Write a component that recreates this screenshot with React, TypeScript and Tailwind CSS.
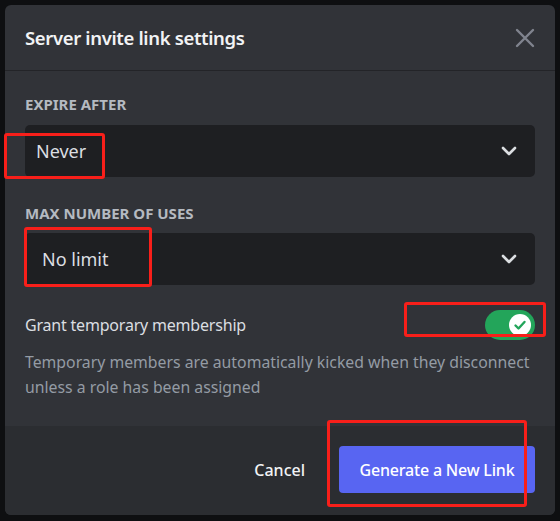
import React from 'react'

const font = { fontFamily: '"Noto Sans", "Open Sans", Arial, sans-serif' }

const Chevron = () => (
  <svg width="16" height="10" viewBox="0 0 16 10" fill="none">
    <path d="M2 2l6 6 6-6" stroke="#dbdee1" strokeWidth="2.6" strokeLinecap="round" strokeLinejoin="round" />
  </svg>
)

const Select = ({ value, pad }: { value: string; pad: string }) => (
  <div className={`flex h-[52px] items-center justify-between rounded-[5px] bg-[#1e1f22] ${pad} pr-[18px]`}>
    <span className="text-[18px] text-[#dbdee1]">{value}</span>
    <Chevron />
  </div>
)

const RedBox = ({ className }: { className: string }) => (
  <div className={`pointer-events-none absolute rounded-[3px] border-[3px] border-[#f81f1a] ${className}`} />
)

export default function App() {
  return (
    <div className="relative h-[521px] w-[560px] overflow-hidden bg-[#0e0f11] pl-[5px] pt-[5px]" style={font}>
      <div className="flex h-[510px] w-[550px] flex-col overflow-hidden rounded-[6px] bg-[#313338]">
        {/* Header */}
        <div className="flex h-[66px] items-center justify-between border-b border-[#232428] px-5">
          <h1 className="text-[18.5px] font-semibold tracking-[-0.35px] text-[#f2f3f5]">Server invite link settings</h1>
          <svg width="20" height="20" viewBox="0 0 20 20" fill="none">
            <path d="M2 2l16 16M18 2L2 18" stroke="#80848e" strokeWidth="2.4" strokeLinecap="round" />
          </svg>
        </div>

        {/* Body */}
        <div className="flex flex-1 flex-col px-5 pt-[23px]">
          <div className="mb-[11px] h-5 text-[15px] font-bold leading-5 text-[#b5bac1]">EXPIRE AFTER</div>
          <Select value="Never" pad="pl-[11px]" />

          <div className="mb-[10px] mt-[26px] h-5 text-[15px] font-bold leading-5 text-[#b5bac1]">MAX NUMBER OF USES</div>
          <Select value="No limit" pad="pl-[17px]" />

          <div className="mt-[25px] flex h-[30px] items-center justify-between">
            <span className="text-[16px] tracking-[-0.2px] text-[#dbdee1]">Grant temporary membership</span>
            <div className="flex h-[30px] w-[50px] items-center justify-end rounded-full bg-[#23a55a] pr-[4px]">
              <div className="flex h-[22px] w-[22px] items-center justify-center rounded-full bg-white">
                <svg width="14" height="14" viewBox="0 0 14 14" fill="none">
                  <path d="M2.5 7.5l3 3 6-6.5" stroke="#23a55a" strokeWidth="2.4" strokeLinecap="round" strokeLinejoin="round" />
                </svg>
              </div>
            </div>
          </div>
          <p className="mt-[10px] text-[15.8px] leading-[25px] text-[#949ba4]">
            Temporary members are automatically kicked when they disconnect unless a role has been assigned
          </p>
        </div>

        {/* Footer */}
        <div className="flex h-[89px] items-start justify-end gap-[34px] bg-[#2b2d31] pr-5 pt-5">
          <button className="h-[47px] text-[16px] font-medium text-[#f2f3f5]">Cancel</button>
          <button className="h-[47px] w-[196px] rounded-[4px] bg-[#5865f2] text-[16px] font-medium tracking-[-0.2px] text-white">
            Generate a New Link
          </button>
        </div>
      </div>

      <RedBox className="left-[4px] top-[133px] h-[46px] w-[101px]" />
      <RedBox className="left-[24px] top-[227px] h-[60px] w-[128px]" />
      <RedBox className="left-[404px] top-[302px] h-[35px] w-[142px]" />
      <RedBox className="left-[327px] top-[420px] h-[87px] w-[200px]" />
    </div>
  )
}
